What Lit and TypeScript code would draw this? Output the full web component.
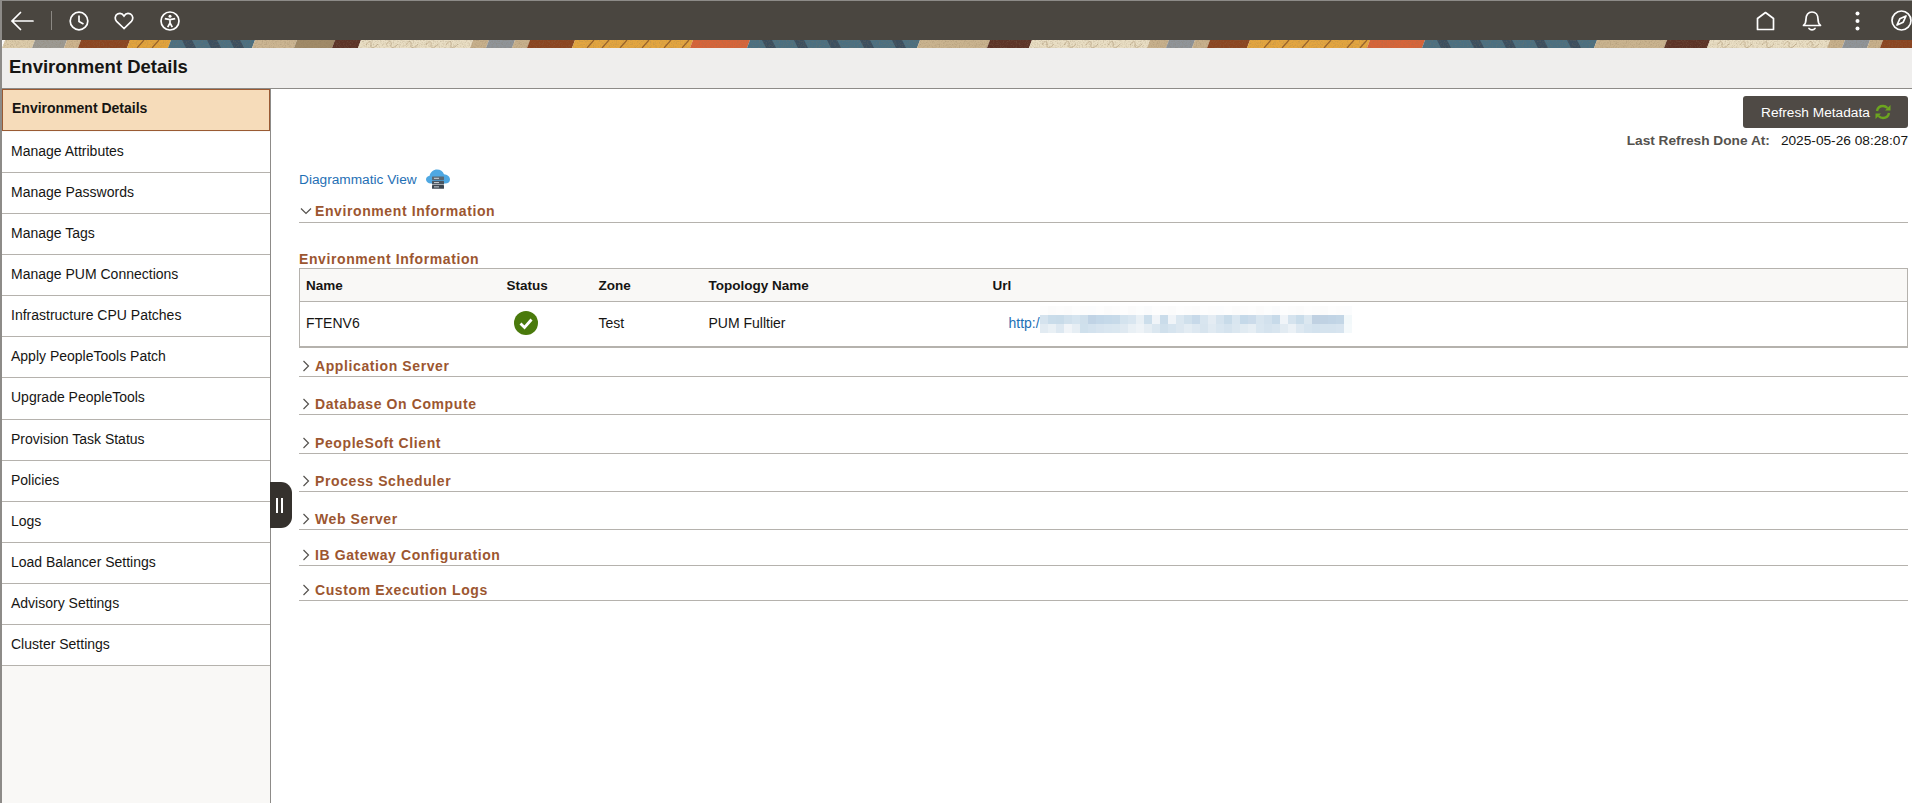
import { LitElement, html, css, svg } from "lit";
import { customElement } from "lit/decorators.js";

const navItems = [
  "Environment Details",
  "Manage Attributes",
  "Manage Passwords",
  "Manage Tags",
  "Manage PUM Connections",
  "Infrastructure CPU Patches",
  "Apply PeopleTools Patch",
  "Upgrade PeopleTools",
  "Provision Task Status",
  "Policies",
  "Logs",
  "Load Balancer Settings",
  "Advisory Settings",
  "Cluster Settings",
];

// label and row height, the rows in the reference are not evenly spaced
const sections: [string, number][] = [
  ["Application Server", 29],
  ["Database On Compute", 38],
  ["PeopleSoft Client", 39],
  ["Process Scheduler", 38],
  ["Web Server", 38],
  ["IB Gateway Configuration", 36.5],
  ["Custom Execution Logs", 35],
];

// start, end, colour of the banner strip
const bannerBands: [number, number, string][] = [
  [0, 30, "#dccbaa"], [30, 62, "#9c9a94"], [62, 76, "#cdb48e"], [76, 125, "#8b4521"],
  [125, 166, "#e2a33c"], [166, 250, "#4b6f81"], [250, 292, "#cbb592"], [292, 330, "#a08a68"],
  [330, 356, "#5c3327"], [356, 468, "#e9dec4"], [468, 484, "#c7b08c"], [484, 510, "#8f9499"],
  [510, 525, "#c7b08c"], [525, 570, "#8b4521"], [570, 688, "#e3a53f"], [688, 745, "#d6643a"],
  [745, 915, "#4b6f81"], [915, 985, "#c9b38f"], [985, 1027, "#5c3327"], [1027, 1145, "#e9dec4"],
  [1145, 1164, "#c7b08c"], [1164, 1190, "#8f9499"], [1190, 1205, "#c7b08c"], [1205, 1245, "#8b4521"],
  [1245, 1365, "#e3a53f"], [1365, 1420, "#d6643a"], [1420, 1592, "#4b6f81"], [1592, 1662, "#c9b38f"],
  [1662, 1705, "#5c3327"], [1705, 1825, "#e9dec4"], [1825, 1840, "#c7b08c"], [1840, 1865, "#8f9499"],
  [1865, 1878, "#c7b08c"], [1878, 1912, "#8b4521"],
];

const blueStripes = [
  180, 205, 228, 760, 792, 825, 858, 890, 1435, 1468, 1500, 1532, 1565,
];
const orangeStrokes = [
  135, 150, 585, 600, 618, 640, 662, 680, 1262, 1280, 1300, 1322, 1345, 1358,
];
const creamSquiggles = [
  364, 384, 404, 424, 444, 1040, 1062, 1084, 1106, 1128, 1715, 1738, 1760, 1782, 1805,
];

const blurRows = [
  "fdfdfd fbfbfb fcfcfc fbfbfb fdfdfd fcfcfc fbfcfd fdfdfd fbfbfb fcfcfc fdfdfd fbfbfb fcfdfd fafbfc fdfdfd fcfcfc fbfbfb fdfdfd fcfcfc fbfbfb fdfdfd fcfcfc fbfcfd fdfdfd fbfbfb fcfcfc fdfdfd fbfbfb fcfdfd fafbfc fdfdfd fcfcfc fbfbfb fdfdfd fcfcfc fbfbfb fdfdfd fcfcfc fbfcfd",
  "d5e3ee c9dcea c8dbe9 d0e0ec d5e4ef cfdfeb c0d3e5 c3d7e8 c5d9e9 c7dae9 d4e3ee d9e6f0 e9f0f5 ccdeeb f0f4f8 cadcea f0f4f8 dbe7f0 d0e0ec c7d9e9 d8e5ef e4ecf3 d5e3ee c8dbe9 d9e6f0 c5d9e9 cbdbea d8e5ef d2e1ed c7dae9 f0f4f8 d5e3ee c9dcea dbe7f0 c0d1e2 c0d2e3 c1d4e5 c3d6e6 f2f8fa",
  "e2ebf2 e9f0f5 dde8f1 f0f4f8 e6eef4 cfe0ec d3e2ee d7e4ef d9e6f0 dae7f0 dfe9f1 e9f0f5 eef3f7 e5edf3 dbe7f0 d0e0ec d6e4ef dce7f0 e3ecf3 dde8f1 d7e4ee e0eaf2 d9e6f0 d5e3ee dbe7f0 e1ebf2 e6eef4 d9e6f0 d5e3ee d8e5ef e2ebf2 ebf1f6 dde8f1 d6e4ef d3e2ee d5e3ee d5e3ee d7e4ef f4f9fb",
];

@customElement("app-root")
export class AppRoot extends LitElement {
  static styles = css`
    :host {
      display: block;
      height: 803px;
      overflow: hidden;
      background: #fff;
      font-family: "Liberation Sans", Arial, sans-serif;
      color: #161513;
    }
    .page {
      height: 803px;
      box-sizing: border-box;
      border-top: 1px solid #8d8b88;
      border-left: 2px solid #8d8b88;
      display: flex;
      flex-direction: column;
    }
    .topbar {
      height: 39px;
      flex: none;
      background: #4a4640;
      display: flex;
      align-items: center;
      justify-content: space-between;
    }
    .topbar svg {
      display: block;
      fill: none;
      stroke: #fff;
      stroke-width: 1.7;
    }
    .group {
      display: flex;
      align-items: center;
    }
    .back { margin-left: 8px; }
    .sep {
      width: 1px;
      height: 19px;
      background: #8b8883;
      margin: 0 17px 0 17px;
    }
    .heart { margin-left: 25px; }
    .access { margin-left: 26px; }
    .bell { margin-left: 27px; }
    .dots { margin-left: 32.5px; }
    .compass { margin-left: 31.5px; }
    .banner {
      display: block;
      height: 8px;
      width: 1910px;
      flex: none;
    }
    .title {
      flex: none;
      box-sizing: border-box;
      background: #efeeed;
      border-bottom: 1px solid #8d8b88;
      height: 41px;
      padding: 7px 0 0 7px;
      font-size: 18.5px;
      line-height: 24px;
      font-weight: bold;
    }
    .body {
      flex: 1;
      display: flex;
      position: relative;
      min-height: 0;
    }
    .side {
      width: 269px;
      flex: none;
      box-sizing: border-box;
      background: #f9f8f6;
      border-right: 1px solid #8d8b88;
    }
    .nav {
      box-sizing: border-box;
      height: 41.08px;
      background: #fff;
      border-bottom: 1px solid #b5b2ad;
      padding-left: 9px;
      font-size: 14px;
      line-height: 38px;
    }
    .nav.active {
      height: 42px;
      margin-bottom: 1px;
      background: #f6dcba;
      border: 1px solid #9a5a33;
      padding-left: 9px;
      font-weight: bold;
      line-height: 36px;
    }
    .handle {
      position: absolute;
      left: 268px;
      top: 393px;
      width: 22px;
      height: 46px;
      background: #35312d;
      border-radius: 0 50% 50% 0 / 0 24% 24% 0;
      display: flex;
      justify-content: center;
      align-items: center;
      gap: 3px;
      padding-right: 4px;
      box-sizing: border-box;
    }
    .handle i {
      display: block;
      width: 2px;
      height: 15px;
      background: #fff;
    }
    .main {
      flex: 1;
      min-width: 0;
      box-sizing: border-box;
      padding: 7px 4px 0 28px;
      font-size: 13.7px;
    }
    .tools {
      display: flex;
      justify-content: flex-end;
    }
    .refresh {
      width: 165px;
      height: 32px;
      box-sizing: border-box;
      border-radius: 3px;
      background: #4f4a45;
      color: #fff;
      display: flex;
      align-items: center;
      padding-left: 18px;
      gap: 5px;
    }
    .last {
      display: flex;
      justify-content: flex-end;
      gap: 11px;
      margin-top: 5px;
      line-height: 16px;
    }
    .last b { color: #55524e; }
    .diagram {
      display: flex;
      align-items: center;
      gap: 9px;
      margin-top: 20px;
      height: 20px;
      color: #1f70b5;
    }
    .section {
      display: flex;
      align-items: flex-end;
      box-sizing: border-box;
      border-bottom: 1px solid #b5b2ad;
      padding-bottom: 1px;
      color: #9c5630;
      font-size: 14px;
      font-weight: bold;
      letter-spacing: 0.6px;
      line-height: 18px;
    }
    .section svg {
      flex: none;
      width: 12px;
      height: 12px;
      margin: 0 3px 3px 1px;
      fill: none;
      stroke: #55524e;
      stroke-width: 1.2;
    }
    .section.open {
      height: 34px;
      padding-bottom: 2px;
    }
    .caption {
      margin-top: 27px;
      color: #9c5630;
      font-size: 14px;
      font-weight: bold;
      letter-spacing: 0.6px;
      line-height: 18px;
    }
    table {
      width: 100%;
      table-layout: fixed;
      border-collapse: collapse;
      border: 1px solid #b5b2ad;
      border-bottom-width: 2px;
    }
    th {
      height: 32px;
      padding: 0 0 0 6px;
      text-align: left;
      background: #f9f8f6;
      border-bottom: 1px solid #b5b2ad;
      font-size: 13.5px;
    }
    td {
      height: 45px;
      box-sizing: border-box;
      padding: 0 0 2px 6px;
      font-size: 14px;
    }
    .status svg { display: block; margin-left: 7px; }
    .url {
      display: flex;
      align-items: center;
      margin-left: 16px;
      color: #1f70b5;
    }
    .blur {
      display: grid;
      grid-template-columns: repeat(39, 8px);
      grid-auto-rows: 9px;
      margin-top: -6px;
    }
  `;

  private renderBanner() {
    return html`<svg class="banner" viewBox="0 0 1910 8" preserveAspectRatio="none">
      <defs>
        <filter id="grain" x="0" y="0" width="100%" height="100%">
          <feTurbulence type="fractalNoise" baseFrequency="0.7" numOctaves="2" seed="4" />
          <feColorMatrix values="0 0 0 0 0.25  0 0 0 0 0.18  0 0 0 0 0.1  1.6 0 0 0 -0.7" />
        </filter>
      </defs>
      ${bannerBands.map(
        ([a, b, c]) => svg`<polygon points="${a + 3},0 ${b + 3},0 ${b},8 ${a},8" fill="${c}" />`
      )}
      ${blueStripes.map(
        (x) => svg`<polygon points="${x},0 ${x + 10},0 ${x + 14},8 ${x + 4},8" fill="#3b4e5f" />`
      )}
      ${orangeStrokes.map(
        (x) => svg`<path d="M${x} 8l7-8" stroke="#96602a" stroke-width="1.200" fill="none" />`
      )}
      ${creamSquiggles.map(
        (x) => svg`<path d="M${x} 5c3-5 6-4 5 0s4 3 7-1" stroke="#c9b798" stroke-width="1" fill="none" />`
      )}
      <rect width="1910" height="8" filter="url(#grain)" opacity=".45" />
    </svg>`;
  }

  private chevron(open: boolean) {
    return open
      ? html`<svg viewBox="0 0 12 12"><path d="M1 3.500l5 5 5-5" /></svg>`
      : html`<svg viewBox="0 0 12 12"><path d="M3.500 1l5 5-5 5" /></svg>`;
  }

  render() {
    return html`
      <div class="page">
        <div class="topbar">
          <div class="group">
            <svg class="back" width="24" height="20" viewBox="0 0 24 20" stroke-linecap="round">
              <path d="M23 10H2M10.500 1.500L2 10l8.500 8.500" />
            </svg>
            <div class="sep"></div>
            <svg width="20" height="20" viewBox="0 0 20 20">
              <circle cx="10" cy="10" r="8.800" />
              <path d="M10 4.500V10.500l4.500 2.500" />
            </svg>
            <svg class="heart" width="20" height="18" viewBox="0 0 20 18">
              <path d="M10 16.500L2.600 9.300C.4 7 1 3.400 3.500 2c2.400-1.300 5-.4 6.500 2 1.500-2.400 4.100-3.300 6.500-2 2.500 1.400 3.100 5 .9 7.300z" />
            </svg>
            <svg class="access" width="20" height="20" viewBox="0 0 20 20">
              <circle cx="10" cy="10" r="9" />
              <circle cx="10" cy="5.200" r="1.500" fill="#fff" stroke="none" />
              <path d="M4.800 7.600L10 8.700l5.200-1.100M10 8.700v3.300M10 12l-2.300 4.200M10 12l2.300 4.200" />
            </svg>
          </div>
          <div class="group">
            <svg width="19" height="20" viewBox="0 0 19 20">
              <path d="M1.500 18.500V7.500L9.500 1.500l8 6v11z" stroke-linejoin="round" />
            </svg>
            <svg class="bell" width="20" height="22" viewBox="0 0 20 22">
              <path d="M1.500 15.500c2-1.600 2.500-3.500 2.500-6.500 0-4 2.200-7 6-7s6 3 6 7c0 3 .5 4.900 2.500 6.500z" stroke-linejoin="round" />
              <path d="M7 18.500c1.500 1.700 4.500 1.700 6 0" stroke-linecap="round" />
            </svg>
            <svg class="dots" width="5" height="20" viewBox="0 0 5 20">
              <circle cx="2.500" cy="2.500" r="2" fill="#fff" stroke="none" />
              <circle cx="2.500" cy="10" r="2" fill="#fff" stroke="none" />
              <circle cx="2.500" cy="17.500" r="2" fill="#fff" stroke="none" />
            </svg>
            <svg class="compass" width="21" height="21" viewBox="0 0 21 21">
              <circle cx="10.500" cy="10.500" r="9.500" />
              <path d="M15 6l-2.800 6.200L6 15l2.800-6.200z" stroke-linejoin="round" />
            </svg>
          </div>
        </div>
        ${this.renderBanner()}
        <div class="title">Environment Details</div>
        <div class="body">
          <div class="side">
            ${navItems.map(
              (n, i) => html`<div class="nav ${i === 0 ? "active" : ""}">${n}</div>`
            )}
          </div>
          <div class="handle"><i></i><i></i></div>
          <div class="main">
            <div class="tools">
              <div class="refresh">
                Refresh Metadata
                <svg width="16" height="16" viewBox="0 0 16 16" fill="none" stroke="#6ca51f" stroke-width="2.400">
                  <path d="M2 7c.6-3 3-5 6-5 1.800 0 3.300.8 4.500 2" />
                  <path d="M14 9c-.6 3-3 5-6 5-1.800 0-3.300-.8-4.500-2" />
                  <path d="M15.500 1v5.500H10zM.5 15V9.500H6z" fill="#6ca51f" stroke="none" />
                </svg>
              </div>
            </div>
            <div class="last"><b>Last Refresh Done At:</b><span>2025-05-26 08:28:07</span></div>
            <div class="diagram">
              Diagrammatic View
              <svg width="24" height="21" viewBox="0 0 24 21">
                <path d="M5 14.500C2 14.500 0 12.800 0 10.500c0-2 1.500-3.500 3.600-3.700C4.300 3 7.500.5 11 .5c3.400 0 6 1.700 7 4.800 3.300.3 6 2.300 6 5.200 0 2.400-2 4-5 4z" fill="#4fa8e2" />
                <rect x="6" y="7.500" width="12" height="3.600" rx=".5" fill="#5b6873" />
                <rect x="6" y="11.800" width="12" height="3.600" rx=".5" fill="#4a5560" />
                <rect x="6" y="16.100" width="12" height="3.600" rx=".5" fill="#3d4751" />
                <path d="M8 9.300h5M8 13.600h5M8 17.900h5" stroke="#dfe4e8" stroke-width=".9" />
              </svg>
            </div>
            <div class="section open">${this.chevron(true)}Environment Information</div>
            <div class="caption">Environment Information</div>
            <table>
              <colgroup>
                <col style="width:201px" /><col style="width:92px" /><col style="width:110px" /><col style="width:284px" /><col />
              </colgroup>
              <thead>
                <tr><th>Name</th><th>Status</th><th>Zone</th><th>Topology Name</th><th>Url</th></tr>
              </thead>
              <tbody>
                <tr>
                  <td>FTENV6</td>
                  <td class="status">
                    <svg width="24" height="24" viewBox="0 0 24 24">
                      <circle cx="12" cy="12" r="12" fill="#4a7a0c" />
                      <path d="M6.500 12.500l4 4 7-8" fill="none" stroke="#fff" stroke-width="2.800" />
                    </svg>
                  </td>
                  <td>Test</td>
                  <td>PUM Fulltier</td>
                  <td>
                    <div class="url">
                      http:/
                      <div class="blur">
                        ${blurRows.flatMap((row) =>
                          row.split(" ").map((c) => html`<span style="background:#${c}"></span>`)
                        )}
                      </div>
                    </div>
                  </td>
                </tr>
              </tbody>
            </table>
            ${sections.map(
              ([label, h]) =>
                html`<div class="section" style="height:${h}px">${this.chevron(false)}${label}</div>`
            )}
          </div>
        </div>
      </div>
    `;
  }
}
